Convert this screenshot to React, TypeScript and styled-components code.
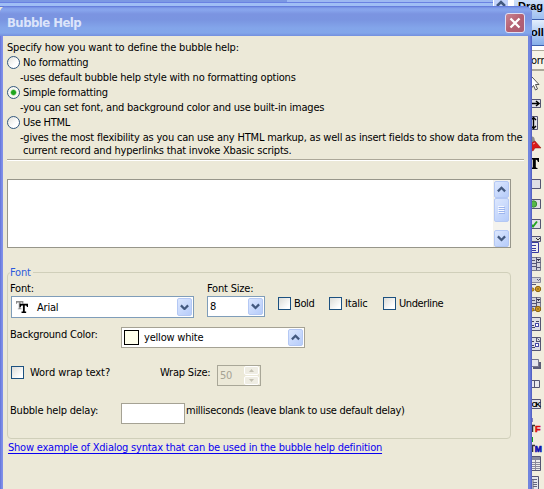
import React from 'react';
import styled, { createGlobalStyle } from 'styled-components';

const GlobalStyle = createGlobalStyle`
  * { box-sizing: border-box; }
  html, body { margin: 0; padding: 0; overflow: hidden; }
`;

const Screen = styled.div`
  position: relative;
  width: 544px;
  height: 489px;
  overflow: hidden;
  background: #ece9d8;
  color: #000;
  font: 11px/15px 'DejaVu Sans Condensed', 'DejaVu Sans', sans-serif;
  letter-spacing: -0.2px;
  white-space: nowrap;
`;

/* Designer window behind the dialog */
const Workspace = styled.div`
  display: flex;
  height: 489px;
`;
const BackTitle = styled.div`
  display: flex;
  width: 493px;
  height: 7px;
  background: linear-gradient(#9db9f2 0 2px, #6a82e2 2px 3px, #9fbef5 3px 6px, #6078dc 6px 7px);
`;
const BackCaption = styled.div`
  width: 287px;
  height: 2px;
  background: #7b98e3;
`;
const BackScroll = styled.div`
  display: flex;
  justify-content: center;
  width: 16px;
  height: 10px;
  border: 1px solid #fff;
  border-top: 0;
  background: #c3d3fb;
`;
const Palette = styled.div`
  width: 35px;
  padding-left: 5px;
  background: #fff;
`;
const PaletteHeader = styled.div<{ $second?: boolean }>`
  height: ${p => (p.$second ? 26 : 20)}px;
  padding: ${p => (p.$second ? '6px 0 0 17px' : '0 0 0 4px')};
  border-bottom: 1px solid #3c5fae;
  background: ${p => (p.$second ? 'linear-gradient(#e3effd, #86aee9)' : 'linear-gradient(#cfe1fa, #9fc0f0)')};
  font: bold 11px/13px 'Liberation Sans', sans-serif;
  letter-spacing: 0;
`;
const PaletteTab = styled.div`
  height: 20px;
  margin-top: 4px;
  padding: 2px 0 0 17px;
  border: solid #aca899;
  border-width: 1px 0;
  background: #f6f3e7;
`;
const Tools = styled.div`
  display: flex;
  flex-direction: column;
  height: 419px;
  padding: 3px 0 0 17px;
  border-top: 1px solid #aca899;
  background: #f1edde;
`;
const ToolIcon = styled.svg`
  display: block;
  flex: none;
  width: 13px;
  height: 20px;
`;

/* Dialog frame */
const Dialog = styled.section`
  position: absolute;
  left: 0;
  top: 6px;
  width: 532px;
  height: 483px;
  padding: 0 4px 0 3px;
  border-radius: 7px 8px 0 0;
  background: linear-gradient(90deg, #6273d8 0, #7f8fe9 2px, #7f8fe9 3px, #6f84de 529px, #7486e2 530px, #5563c6 531px);
`;
const TitleBar = styled.header`
  display: flex;
  align-items: center;
  justify-content: space-between;
  height: 30px;
  margin: 0 -4px 0 -3px;
  padding: 4px 7px 0 7px;
  border-radius: 7px 8px 0 0;
  background: linear-gradient(#5c74d8 0, #829ee9 2px, #88a6ed 4px, #7b94e1 8px, #7a95e1 14px, #83a5ea 22px, #82a6ea 27px, #738fde 30px);
`;
const Title = styled.h1`
  margin: 0;
  color: #dce4fa;
  font: bold 13px/18px 'DejaVu Sans Condensed', sans-serif;
  letter-spacing: -0.55px;
`;
const CloseButton = styled.button`
  display: flex;
  width: 20px;
  height: 20px;
  padding: 0;
  border: 1px solid #dfdff3;
  border-radius: 3px;
  background: linear-gradient(135deg, #c98593, #b56072 50%, #a95c74);
`;
const Body = styled.main`
  height: 453px;
  padding: 4px 0 0 4px;
  background: #ece9d8;
`;

/* Formatting choice */
const Line = styled.div<{ $indent?: number; $h?: number; $track?: number }>`
  height: ${p => p.$h ?? 15}px;
  padding-left: ${p => p.$indent ?? 0}px;
  letter-spacing: ${p => p.$track ?? -0.2}px;
`;
const Choice = styled.label`
  display: flex;
  align-items: center;
  gap: 3px;
  height: 15px;
  letter-spacing: -0.26px;
`;
const Radio = styled.span<{ $on?: boolean }>`
  width: 13px;
  height: 13px;
  border: 1px solid #33597f;
  border-radius: 50%;
  background: ${p =>
    p.$on
      ? 'radial-gradient(circle, #1fa51f 0 2px, #7ccb74 2.6px, #f8f8f4 3.4px)'
      : 'linear-gradient(135deg, #e2e2dc, #fff 65%)'};
`;
const Rule = styled.hr`
  width: 517px;
  height: 2px;
  margin: 1px 0 18px;
  border: 0;
  border-top: 1px solid #aca899;
  border-bottom: 1px solid #fff;
`;
const HelpText = styled.div`
  display: flex;
  justify-content: flex-end;
  width: 504px;
  height: 69px;
  border: 1px solid #97968a;
  background: #fff;
`;
const ScrollBar = styled.div`
  display: flex;
  flex-direction: column;
  justify-content: space-between;
  width: 17px;
  padding: 1px;
  background: #f4f3ee;
`;
const Knob = styled.div<{ $h?: number }>`
  display: flex;
  flex: none;
  align-items: center;
  justify-content: center;
  width: 15px;
  height: ${p => p.$h ?? 17}px;
  border: 1px solid #b4c8f4;
  border-radius: 2px;
  background: linear-gradient(135deg, #dce7fe, #b6ccfa);
`;
const Thumb = styled(Knob)`
  margin-bottom: 8px;
`;

/* Font group */
const Group = styled.fieldset`
  display: block;
  width: 504px;
  height: 174px;
  margin: 17px 0 0;
  padding: 0 0 0 2px;
  border: 1px solid #d0cfba;
  border-radius: 4px;
`;
const Legend = styled.legend`
  height: 15px;
  padding: 0 2px 0 0;
  color: #2c5bdc;
`;
const Row = styled.div<{ $h: number; $inset?: boolean }>`
  display: flex;
  align-items: flex-start;
  height: ${p => p.$h}px;
  padding-left: ${p => (p.$inset ? 1 : 0)}px;
`;
const Caption = styled.span<{ $w?: number; $top?: number; $gap?: number; $track?: number }>`
  flex: none;
  width: ${p => (p.$w ? `${p.$w}px` : 'auto')};
  margin-top: ${p => p.$top ?? 0}px;
  margin-left: ${p => p.$gap ?? 0}px;
  letter-spacing: ${p => p.$track ?? -0.2}px;
`;
const Combo = styled.div<{ $w: number; $h: number; $right?: number; $plain?: boolean }>`
  display: flex;
  align-items: center;
  width: ${p => p.$w}px;
  height: ${p => p.$h}px;
  margin-right: ${p => p.$right ?? 0}px;
  padding: 0 1px 0 2px;
  border: 1px solid ${p => (p.$plain ? '#a5a294' : '#7f9db9')};
  background: #fff;
`;
const ComboText = styled.span`
  flex: 1;
`;
const FontIcon = styled.svg`
  width: 12px;
  height: 12px;
  margin: 0 9px 0 2px;
`;
const Swatch = styled.span`
  width: 15px;
  height: 15px;
  margin: 0 5px 0 0;
  border: 1px solid #000;
  background: #ffffec;
`;
const CheckItem = styled.label<{ $w?: number; $gap?: number; $track?: number }>`
  display: flex;
  align-items: center;
  gap: ${p => p.$gap ?? 3}px;
  width: ${p => (p.$w ? `${p.$w}px` : 'auto')};
  height: 15px;
  letter-spacing: ${p => p.$track ?? -0.4}px;
`;
const Box = styled.span`
  flex: none;
  width: 13px;
  height: 13px;
  border: 1px solid #1c5180;
  background: linear-gradient(135deg, #dcdcd7, #fff 80%);
`;
const Spinner = styled.div`
  display: flex;
  align-items: center;
  justify-content: space-between;
  width: 44px;
  height: 21px;
  padding-left: 2px;
  border: 1px solid #a9a798;
  color: #a6a394;
`;
const SpinButtons = styled.div`
  display: flex;
  flex-direction: column;
  gap: 1px;
  padding-right: 1px;
`;
const SpinButton = styled.div`
  display: flex;
  align-items: center;
  justify-content: center;
  width: 15px;
  height: 9px;
  border: 1px solid #fff;
  border-radius: 2px;
  background: #efede3;
`;
const Field = styled.div`
  width: 64px;
  height: 21px;
  border: 1px solid #a5a294;
  background: #fff;
`;
const Link = styled.a`
  display: block;
  width: max-content;
  margin: 1px 0 0 1px;
  color: #0a00f0;
  text-decoration: underline;
  text-decoration-skip-ink: none;
  text-underline-offset: 2px;
  letter-spacing: -0.22px;
`;

const Arrow = ({ up, w = 9 }: { up?: boolean; w?: number }) => (
  <svg width={w} height={w * 0.75} viewBox="0 0 8 6">
    <path d={up ? 'M0.8 4.8 4 1.6 7.2 4.8' : 'M0.8 1.2 4 4.4 7.2 1.2'} fill="none" stroke="#43597f" strokeWidth="2" />
  </svg>
);
const SpinArrow = ({ up }: { up?: boolean }) => (
  <svg width="5" height="3" viewBox="0 0 5 3">
    <path d={up ? 'M0 3 2.5 0 5 3z' : 'M0 0 2.5 3 5 0z'} fill="#c5c2b4" />
  </svg>
);

const INK = '#555573';
const frame = (y: number, h: number) => (
  <path d={`M-1 ${y}.5H9.5V${y + h}.5H-1`} fill="#dfdfe6" stroke={INK} />
);
const listShape = (
  <g>
    <path d="M0 3.5H9.5V16.5H0" fill="#d4d4dc" stroke="#77778c" />
    <path d="M0 6.5H4M0 9.5H5M0 12.5H5M5.5 3V16M5 8.5H9.5M5 13.5H9.5" stroke={INK} fill="none" />
    <path d="M6 5.5H9M7.5 5V7" stroke="#34344c" />
  </g>
);
const coin = (
  <g fill="#d29a22" stroke="#8d6410">
    <circle cx="7" cy="15" r="2.7" />
    <circle cx="1.5" cy="15.5" r="1.5" />
    <circle cx="7" cy="15" r=".6" fill="#fff0b0" />
  </g>
);
const gridShape = (
  <g>
    {frame(3, 13)}
    <path d="M0 7.5H3M0 11.5H3M5 7.5H8M0 13.5H4" stroke="#45455f" />
    <rect x="4.5" y="9.5" width="3" height="3" fill="#fff" stroke="#4747a5" />
  </g>
);

const tools: React.ReactNode[] = [
  <path d="M.5 3V14L2.5 11.500 4.500 16 6.500 15 4.500 10.500H8L1 3" fill="#fff" stroke="#555" />,
  <g>{frame(5, 8)}<path d="M0 9.500H8M5 7 8 9.500 5 12" fill="none" stroke="#000" strokeWidth="1.500" /></g>,
  <g><path d="M0 2.500H6.500V15.500H0" fill="#e2e2ea" stroke={INK} /><path d="M2.500 4V14M0 6 2.500 3.500 5 6M0 12 2.500 14.500 5 12" fill="none" stroke="#000" strokeWidth="1.400" /></g>,
  <g><path d="M0 3Q4 1 4 9H0" fill="#8c8c8c" /><path d="M0 9 4 7 10 14 4 14 2 17 0 16z" fill="#d91919" stroke="#8a1010" strokeWidth=".5" /><path d="M2 10 4 9" stroke="#ff9a9a" /></g>,
  <path d="M0 4H8V8H7Q6.500 5.500 4.800 5.500V13Q4.800 14 6.500 14V15H0V14Q1.800 14 1.800 13V5.500H0z" fill="#000" />,
  frame(5, 9),
  <g>{frame(5, 9)}<circle cx="2.500" cy="10" r="3.200" fill="#54b847" stroke="#3d8a38" /></g>,
  <g>{frame(5, 9)}<path d="M0 10.500 2 12.500 6 7.500" fill="none" stroke="#23a321" strokeWidth="2" /></g>,
  <g><path d="M0 2.500H9.500V7.500H0" fill="#ddd" stroke={INK} /><path d="M5 4 7 6 9 4" fill="none" stroke="#333" /><path d="M0 8.500H7.500V18.500H0" fill="#eee" stroke="#3838a0" /><path d="M0 11.500H5M0 14.500H5M0 16.500H5" stroke="#3838a0" /></g>,
  listShape,
  <g><path d="M0 3.500H9.500V8.500H0" fill="#d4d4dc" stroke="#8a8a9c" /><path d="M6 5 7.500 6.500 9 5M0 10.500H5" fill="none" stroke={INK} />{coin}</g>,
  <g>{listShape}{coin}</g>,
  gridShape,
  <g>{gridShape}<path d="M5.500 3V7.500H9M6.500 4.500 8.500 6.500" fill="none" stroke={INK} /></g>,
  <g><path d="M2 8H10V15H2z" fill="#5c5c78" /><path d="M0 5.500H7.500V12.500H0" fill="#e5e5ec" stroke="#77778c" /></g>,
  <g><path d="M0 6.500H8.500V13.500H0M3.500 6V13" fill="#e8e8ee" stroke={INK} /></g>,
  <g>{frame(5, 9)}<text x="0.500" y="13" fontFamily="Liberation Sans" fontWeight="bold" fontSize="7.500" letterSpacing="-1.800">OK</text></g>,
  <g fontFamily="Liberation Sans" fontWeight="bold"><path d="M0 4H1.500V8H0" fill="#16169a" /><path d="M0 11.500H4M1.500 11V18" stroke="#333" strokeWidth="1.500" /><text x="4" y="18" fill="#d80d0d" stroke="#d80d0d" strokeWidth=".6" fontSize="9">F</text></g>,
  <g fontFamily="Liberation Sans" fontWeight="bold"><path d="M0 3H2V8H0" fill="#159a20" /><path d="M0 11.500H4M1.500 11V18" stroke="#333" strokeWidth="1.500" /><text x="3.800" y="18" fill="#1111ad" stroke="#1111ad" strokeWidth=".6" fontSize="8.500">M</text></g>,
  <g><path d="M0 2.500H9.500V16.500H0" fill="#eee" stroke={INK} /><path d="M0 4.500H9" stroke="#8a8a9c" strokeWidth="3" /><path d="M4.500 3V16M0 8.500H9M0 10.500H9M0 12.500H9M0 14.500H9" stroke="#8a8a9c" fill="none" /></g>,
  <g><path d="M0 2.500H7.500V15.500H0" fill="#e6e6ec" stroke={INK} /><path d="M0 5.500H6M2 8.500H6M2 10.500H6M2 12.500H6M2 5V15" stroke="#66667e" /></g>,
];

export default function App() {
  return (
    <Screen>
      <GlobalStyle />
      <Workspace>
        <BackTitle><BackCaption /></BackTitle>
        <BackScroll><Arrow up w={10} /></BackScroll>
        <Palette>
          <PaletteHeader>Drag</PaletteHeader>
          <PaletteHeader $second>oll</PaletteHeader>
          <PaletteTab>orr</PaletteTab>
          <Tools>
            {tools.map((shape, i) => (
              <ToolIcon key={i} viewBox="0 0 13 20">{shape}</ToolIcon>
            ))}
          </Tools>
        </Palette>
      </Workspace>

      <Dialog>
        <TitleBar>
          <Title>Bubble Help</Title>
          <CloseButton aria-label="Close">
            <svg width="18" height="18" viewBox="0 0 18 18">
              <path d="M4.500 4.500 13.500 13.500M13.500 4.500 4.500 13.500" stroke="#fff" strokeWidth="2.300" />
            </svg>
          </CloseButton>
        </TitleBar>
        <Body>
          <Line $track={-0.17}>Specify how you want to define the bubble help:</Line>
          <Choice><Radio />No formatting</Choice>
          <Line $indent={13}>-uses default bubble help style with no formatting options</Line>
          <Choice><Radio $on />Simple formatting</Choice>
          <Line $indent={13}>-you can set font, and background color and use built-in images</Line>
          <Choice><Radio />Use HTML</Choice>
          <Line $indent={13} $h={13}>-gives the most flexibility as you can use any HTML markup, as well as insert fields to show data from the</Line>
          <Line $indent={16}>current record and hyperlinks that invoke Xbasic scripts.</Line>
          <Rule />
          <HelpText>
            <ScrollBar>
              <Knob><Arrow up /></Knob>
              <Thumb $h={24}>
                <svg width="7" height="8" viewBox="0 0 7 8"><path d="M0 .5H6M0 2.500H6M0 4.500H6M0 6.500H6" stroke="#f5f8ff" /><path d="M1 1.500H7M1 3.500H7M1 5.500H7M1 7.500H7" stroke="#9db5ee" /></svg>
              </Thumb>
              <Knob><Arrow /></Knob>
            </ScrollBar>
          </HelpText>

          <Group>
            <Legend>Font</Legend>
            <Row $h={16}>
              <Caption $w={197} $top={1}>Font:</Caption>
              <Caption $top={1}>Font Size:</Caption>
            </Row>
            <Row $h={31} $inset>
              <Combo $w={183} $h={22} $right={13}>
                <FontIcon viewBox="0 0 13 13">
                  <path d="M0 0H8V3H7L6.500 1.500H5V8H6V9H2V8H3V1.500H1.500L1 3H0z" fill="#8b8b8b" />
                  <path d="M4 3H13V6.500H12L11 5H9.500V11.500H11V13H6V11.500H7.500V5H6L5 6.500H4z" fill="#000" />
                </FontIcon>
                <ComboText>Arial</ComboText>
                <Knob $h={18}><Arrow /></Knob>
              </Combo>
              <Combo $w={58} $h={21} $right={13}>
                <ComboText>8</ComboText>
                <Knob $h={17}><Arrow /></Knob>
              </Combo>
              <CheckItem $w={51}><Box />Bold</CheckItem>
              <CheckItem $w={54} $track={-0.2}><Box />Italic</CheckItem>
              <CheckItem><Box />Underline</CheckItem>
            </Row>
            <Row $h={38}>
              <Caption $w={111}>Background Color:</Caption>
              <Combo $w={184} $h={21} $plain>
                <Swatch />
                <ComboText>yellow white</ComboText>
                <Knob $h={17}><Arrow up /></Knob>
              </Combo>
            </Row>
            <Row $h={38} $inset>
              <CheckItem $w={149} $gap={6} $track={-0.05}><Box />Word wrap text?</CheckItem>
              <Caption $w={57}>Wrap Size:</Caption>
              <Spinner>
                50
                <SpinButtons>
                  <SpinButton><SpinArrow up /></SpinButton>
                  <SpinButton><SpinArrow /></SpinButton>
                </SpinButtons>
              </Spinner>
            </Row>
            <Row $h={21}>
              <Caption $w={111}>Bubble help delay:</Caption>
              <Field />
              <Caption $gap={1} $track={-0.26}>milliseconds (leave blank to use default delay)</Caption>
            </Row>
          </Group>
          <Link>Show example of Xdialog syntax that can be used in the bubble help definition</Link>
        </Body>
      </Dialog>
    </Screen>
  );
}
